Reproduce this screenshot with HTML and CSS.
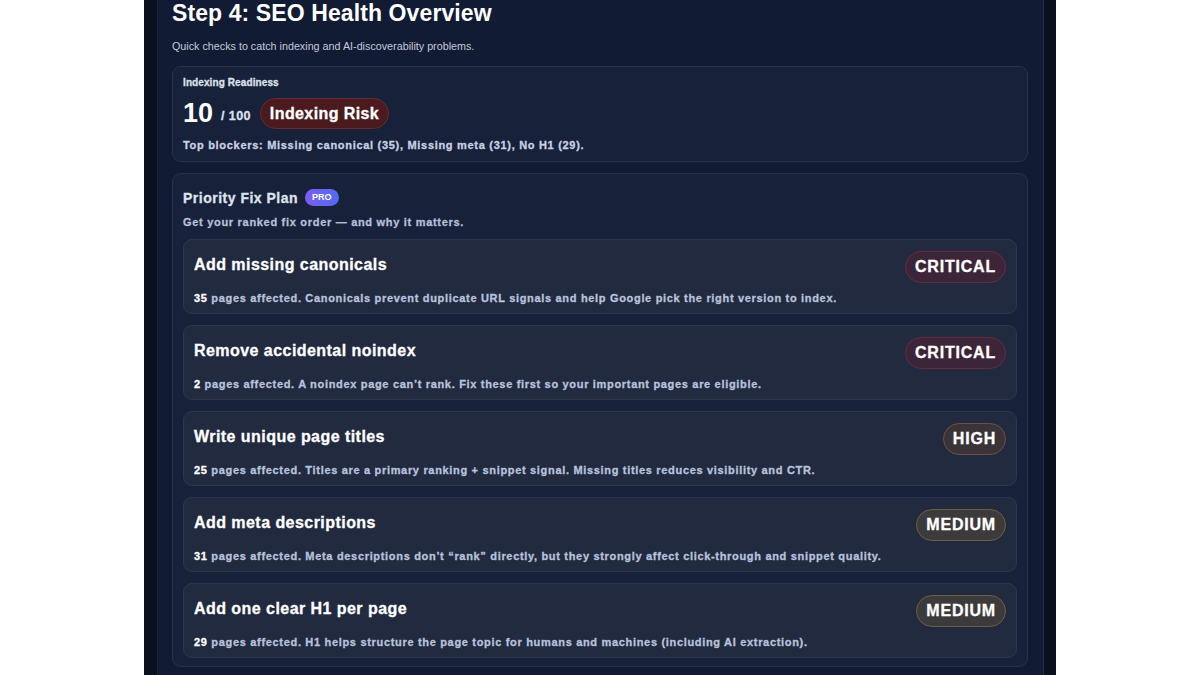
FILE: index.html
```html
<!DOCTYPE html>
<html>
    <head>
        <title>SEO Health Overview</title>
        <meta charset="utf-8">
        <link rel="stylesheet" href="styles.css">
    </head>
    <body>
        <div class="frame">
            <div class="panel">
                <h2 class="step-title">Step 4: SEO Health Overview</h2>
                <p class="step-sub">Quick checks to catch indexing and AI-discoverability problems.</p>

                <div class="card readiness">
                    <div class="card-label">Indexing Readiness</div>
                    <div class="score-row">
                        <span class="score">10</span>
                        <span class="score-max">/ 100</span>
                        <span class="risk">Indexing Risk</span>
                    </div>
                    <div class="blockers">Top blockers: Missing canonical (35), Missing meta (31), No H1 (29).</div>
                </div>

                <div class="card plan">
                    <div class="plan-head">
                        <span class="plan-title">Priority Fix Plan</span>
                        <span class="pro">PRO</span>
                    </div>
                    <div class="plan-sub">Get your ranked fix order — and why it matters.</div>

                    <div class="fix">
                        <div class="fix-top">
                            <div class="fix-title">Add missing canonicals</div>
                            <span class="level critical">CRITICAL</span>
                        </div>
                        <div class="fix-desc"><b>35</b> pages affected. Canonicals prevent duplicate URL signals and help Google pick the right version to index.</div>
                    </div>
                    <div class="fix">
                        <div class="fix-top">
                            <div class="fix-title">Remove accidental noindex</div>
                            <span class="level critical">CRITICAL</span>
                        </div>
                        <div class="fix-desc"><b>2</b> pages affected. A noindex page can’t rank. Fix these first so your important pages are eligible.</div>
                    </div>
                    <div class="fix">
                        <div class="fix-top">
                            <div class="fix-title">Write unique page titles</div>
                            <span class="level high">HIGH</span>
                        </div>
                        <div class="fix-desc"><b>25</b> pages affected. Titles are a primary ranking + snippet signal. Missing titles reduces visibility and CTR.</div>
                    </div>
                    <div class="fix">
                        <div class="fix-top">
                            <div class="fix-title">Add meta descriptions</div>
                            <span class="level medium">MEDIUM</span>
                        </div>
                        <div class="fix-desc"><b>31</b> pages affected. Meta descriptions don’t “rank” directly, but they strongly affect click-through and snippet quality.</div>
                    </div>
                    <div class="fix">
                        <div class="fix-top">
                            <div class="fix-title">Add one clear H1 per page</div>
                            <span class="level medium">MEDIUM</span>
                        </div>
                        <div class="fix-desc"><b>29</b> pages affected. H1 helps structure the page topic for humans and machines (including AI extraction).</div>
                    </div>
                </div>
            </div>
        </div>
    </body>
</html>
```

FILE: styles.css
```css
* {
    margin: 0;
    padding: 0;
    box-sizing: border-box;
}
body {
    background-color: #fff;
    font-family: "Liberation Sans", Arial, sans-serif;
    color: #fff;
}
.frame {
    width: 912px;
    height: 675px;
    margin-left: 144px;
    background-color: #0a101d;
    padding-left: 13px;
    overflow: hidden;
}
.panel {
    width: 887px;
    height: 675px;
    background-color: #111b33;
    border-right: 1px solid #222e4a;
    border-left: 1px solid #17213a;
    padding: 0 15px 0 14px;
}
.step-title {
    font-size: 23px;
    line-height: 26px;
    font-weight: bold;
    color: #fff;
    letter-spacing: 0.1px;
}
.step-sub {
    margin-top: 13px;
    font-size: 10.75px;
    line-height: 14px;
    color: #c3cad9;
}
.card {
    background-color: #172139;
    border: 1px solid #28334d;
    border-radius: 9px;
}
/* heavy small text, as in the original build */
.card-label,
.score-max,
.blockers,
.plan-title,
.plan-sub,
.fix-title,
.fix-desc,
.level,
.risk {
    -webkit-text-stroke: 0.3px currentColor;
}
.readiness {
    margin-top: 13px;
    height: 96px;
    padding: 10px 10px 0 10px;
}
.card-label {
    font-size: 10px;
    font-weight: bold;
    color: #dde2ec;
    line-height: 12px;
    letter-spacing: 0.1px;
}
.score-row {
    display: flex;
    align-items: center;
    margin-top: 9px;
    height: 30px;
}
.score {
    font-size: 27px;
    font-weight: bold;
    color: #fff;
}
.score-max {
    font-size: 12.5px;
    font-weight: bold;
    color: #dde2ec;
    margin-left: 8px;
    margin-top: 5px;
    letter-spacing: 0.4px;
}
.risk {
    margin-left: 9px;
    height: 31px;
    line-height: 29px;
    padding: 0 9px;
    border-radius: 16px;
    background-color: #4a1a1f;
    border: 1px solid #6a2a31;
    font-size: 16px;
    font-weight: bold;
    letter-spacing: 0.4px;
}
.blockers {
    margin-top: 11px;
    font-size: 11px;
    font-weight: bold;
    color: #c9d0e2;
    letter-spacing: 0.7px;
}
.plan {
    margin-top: 11px;
    padding: 14px 10px 8px 10px;
}
.plan-head {
    display: flex;
    align-items: center;
    height: 19px;
}
.plan-title {
    font-size: 14px;
    font-weight: bold;
    color: #dfe3ee;
    letter-spacing: 0.5px;
}
.pro {
    margin-left: 7px;
    height: 17px;
    line-height: 17px;
    padding: 0 7px;
    border-radius: 9px;
    background: linear-gradient(90deg, #7b5cf5, #4f6cf2);
    font-size: 9px;
    font-weight: bold;
    color: #fff;
}
.plan-sub {
    margin-top: 9px;
    font-size: 11px;
    font-weight: bold;
    color: #b6bfd8;
    letter-spacing: 0.7px;
}
.fix {
    margin-top: 11px;
    height: 75px;
    background-color: #212a3f;
    border: 1px solid #2d3850;
    border-radius: 9px;
    padding: 11px 10px 0 10px;
}
.fix-top {
    display: flex;
    justify-content: space-between;
    align-items: flex-start;
    height: 31px;
}
.fix-title {
    font-size: 16px;
    font-weight: bold;
    color: #fff;
    margin-top: 5px;
    letter-spacing: 0.45px;
}
.level {
    height: 32px;
    line-height: 30px;
    padding: 0 9px;
    border-radius: 16px;
    font-size: 16px;
    font-weight: bold;
    letter-spacing: 0.8px;
    color: #fff;
}
.critical {
    background-color: #3c2538;
    border: 1px solid #652c40;
}
.high {
    background-color: #3a3337;
    border: 1px solid #6e5040;
}
.medium {
    background-color: #3c3a3b;
    border: 1px solid #6a5e45;
}
.fix-desc {
    margin-top: 10px;
    font-size: 11px;
    font-weight: bold;
    color: #b9c2dd;
    letter-spacing: 0.68px;
}
.fix-desc b {
    color: #fff;
}
```
